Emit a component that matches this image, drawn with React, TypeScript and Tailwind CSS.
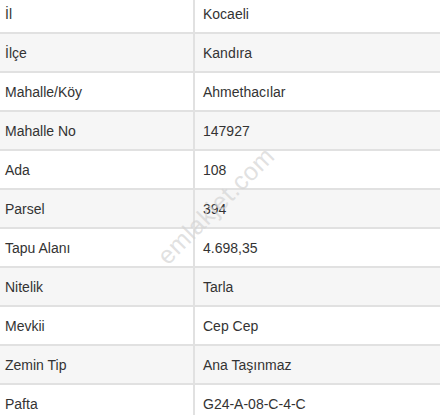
import React from 'react';

const rows: [string, string][] = [
  ['İl', 'Kocaeli'],
  ['İlçe', 'Kandıra'],
  ['Mahalle/Köy', 'Ahmethacılar'],
  ['Mahalle No', '147927'],
  ['Ada', '108'],
  ['Parsel', '394'],
  ['Tapu Alanı', '4.698,35'],
  ['Nitelik', 'Tarla'],
  ['Mevkii', 'Cep Cep'],
  ['Zemin Tip', 'Ana Taşınmaz'],
  ['Pafta', 'G24-A-08-C-4-C'],
];

export default function App() {
  return (
    <div
      className="relative w-[440px] h-[415px] overflow-hidden bg-white text-[#333] text-[14px]"
      style={{ fontFamily: '"Liberation Sans", Arial, sans-serif' }}
    >
      <div className="mt-[-5px]">
        {rows.map(([label, value], i) => (
          <div
            key={label}
            className={`flex h-[39px] border-b-2 border-[#e1e1e1] ${i % 2 === 1 ? 'bg-[#f6f6f6]' : 'bg-white'}`}
          >
            <div className="w-[195px] shrink-0 flex items-center pt-[2px] pl-[5px] border-r-2 border-[#e1e1e1]">
              {label}
            </div>
            <div className="flex-1 flex items-center pt-[2px] pl-[8px]">{value}</div>
          </div>
        ))}
      </div>

      {/* watermark */}
      <div className="pointer-events-none absolute left-[216px] top-[206px] -translate-x-1/2 -translate-y-1/2 -rotate-45 text-[25px] text-[#d4d4d4]/70 whitespace-nowrap tracking-[0.5px]">
        emlakjet.com
      </div>
    </div>
  );
}
